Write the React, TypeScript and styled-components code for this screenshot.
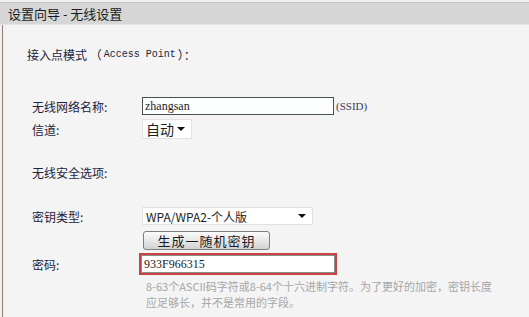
import React from "react";
import styled, { createGlobalStyle } from "styled-components";

const GlobalStyle = createGlobalStyle`
  html, body {
    margin: 0;
    padding: 0;
    background: #f0f0f0;
    width: 529px;
    height: 317px;
    overflow: hidden;
  }
  body {
    font-family: "Noto Sans CJK SC", "Noto Sans", sans-serif;
  }
`;

const Page = styled.div`
  padding-top: 2px;
  height: 315px;
  display: flex;
  flex-direction: column;
`;

const Header = styled.div`
  height: 21px;
  border-top: 1px solid #c4c4c4;
  border-bottom: 1px solid #e6e6e6;
  background: #d6d6d6;
  display: flex;
  align-items: center;
  padding-left: 8px;
  font-size: 13px;
  color: #1c1c1c;
`;

const Content = styled.div`
  flex: 1;
  margin-left: 2px;
  border-left: 1px solid #8c807c;
  box-shadow: inset 3px 0 0 #f8efed;
  background: #f4f4f4;
  padding: 20px 0 0 29px;
  display: flex;
  flex-direction: column;
`;

const Title = styled.div<{ $top?: number; $indent?: number }>`
  height: 18px;
  margin-top: ${(p) => p.$top ?? 0}px;
  margin-left: ${(p) => p.$indent ?? 0}px;
  display: flex;
  align-items: center;
  font-size: 12px;
  color: #23233a;
`;

const Mono = styled.span`
  font-family: "Liberation Mono", "Courier New", monospace;
  font-size: 10px;
  margin: 0 2px;
`;

const Row = styled.div<{ $top: number; $h: number }>`
  display: flex;
  align-items: center;
  height: ${(p) => p.$h}px;
  margin-top: ${(p) => p.$top}px;
`;

const Label = styled.div`
  width: 110px;
  font-size: 12px;
  color: #23233a;
`;

const TextBox = styled.div`
  box-sizing: border-box;
  width: 192px;
  height: 18px;
  border: 1px solid #45524f;
  background: #fdfffe;
  padding-left: 2px;
  display: flex;
  align-items: center;
  font-family: "Liberation Serif", serif;
  font-size: 12px;
  color: #1c1c1c;
`;

const Suffix = styled.span`
  margin-left: 2px;
  font-family: "Liberation Serif", serif;
  font-size: 11px;
  color: #3a3a58;
`;

const Select = styled.div<{ $w: number; $h: number; $fs: number }>`
  box-sizing: border-box;
  width: ${(p) => p.$w}px;
  height: ${(p) => p.$h}px;
  border: 1px solid #e2e2e2;
  background: #ffffff;
  display: flex;
  align-items: center;
  justify-content: space-between;
  padding: 0 6px 0 3px;
  font-size: ${(p) => p.$fs}px;
  color: #1c1c1c;
`;

const Arrow = styled.span`
  width: 0;
  height: 0;
  border-left: 4px solid transparent;
  border-right: 4px solid transparent;
  border-top: 4px solid #111;
`;

const Button = styled.div`
  box-sizing: border-box;
  margin-left: 111px;
  width: 127px;
  height: 19px;
  border: 1px solid #7e7e7e;
  border-radius: 3px;
  background: linear-gradient(#fbfbfb, #e6e6e6 55%, #d2d2d2);
  display: flex;
  align-items: center;
  justify-content: center;
  font-size: 13px;
  letter-spacing: 1px;
  color: #1c1c1c;
`;

const PassBox = styled.div`
  box-sizing: border-box;
  margin-left: -3px;
  width: 198px;
  height: 22px;
  border: 2px solid #c44448;
  display: flex;
`;

const PassInner = styled.div`
  flex: 1;
  border: 1px solid #8e8a8a;
  background: #ffffff;
  padding-left: 2px;
  display: flex;
  align-items: center;
  font-family: "Liberation Serif", serif;
  font-size: 12px;
  color: #1c1c1c;
`;

const Hint = styled.div`
  margin: 3px 0 0 114px;
  font-size: 11px;
  line-height: 16px;
  color: #a6a6a6;
  white-space: nowrap;
`;

export default function App() {
  return (
    <>
      <GlobalStyle />
      <Page>
        <Header>设置向导 - 无线设置</Header>
        <Content>
          <Title $indent={-5}>
            接入点模式 （<Mono>Access Point</Mono>）：
          </Title>
          <Row $top={34} $h={18}>
            <Label>无线网络名称:</Label>
            <TextBox>zhangsan</TextBox>
            <Suffix>(SSID)</Suffix>
          </Row>
          <Row $top={4} $h={20}>
            <Label>信道:</Label>
            <Select $w={50} $h={20} $fs={14}>
              自动
              <Arrow />
            </Select>
          </Row>
          <Title $top={24}>无线安全选项:</Title>
          <Row $top={26} $h={18}>
            <Label>密钥类型:</Label>
            <Select $w={171} $h={18} $fs={12}>
              WPA/WPA2-个人版
              <Arrow />
            </Select>
          </Row>
          <Row $top={6} $h={19}>
            <Button>生成一随机密钥</Button>
          </Row>
          <Row $top={3} $h={22}>
            <Label>密码:</Label>
            <PassBox>
              <PassInner>933F966315</PassInner>
            </PassBox>
          </Row>
          <Hint>
            8-63个ASCII码字符或8-64个十六进制字符。为了更好的加密，密钥长度
            <br />
            应足够长，并不是常用的字段。
          </Hint>
        </Content>
      </Page>
    </>
  );
}
